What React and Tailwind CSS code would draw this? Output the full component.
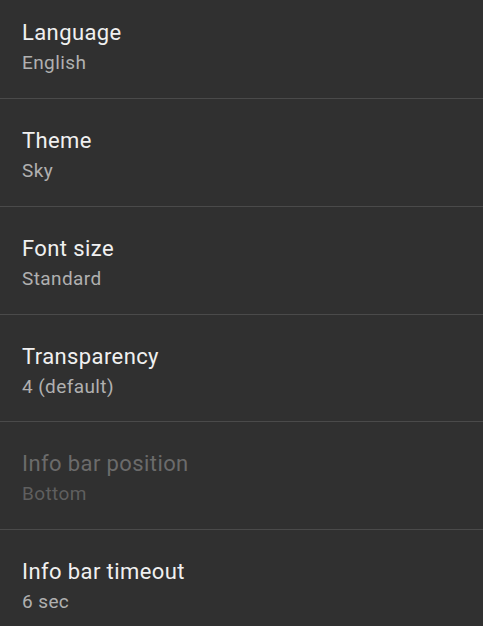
import React from "react";

const items = [
  { title: "Language", value: "English" },
  { title: "Theme", value: "Sky" },
  { title: "Font size", value: "Standard" },
  { title: "Transparency", value: "4 (default)" },
  { title: "Info bar position", value: "Bottom", disabled: true },
  { title: "Info bar timeout", value: "6 sec" },
];

function SettingRow({ title, value, disabled }) {
  return (
    <div className="h-[107.75px] px-[22px] pt-[28px] border-b border-[#4a4a4a] tracking-[0.4px]">
      <div
        className={
          "text-[22px] leading-[28px] " +
          (disabled ? "text-[#6b6b6b]" : "text-[#f0f0f0]")
        }
      >
        {title}
      </div>
      <div
        className={
          "text-[19px] leading-[24px] mt-[4px] " +
          (disabled ? "text-[#5f5f5f]" : "text-[#b0b0b0]")
        }
      >
        {value}
      </div>
    </div>
  );
}

export default function App() {
  return (
    <div
      className="w-[483px] h-[626px] bg-[#303030] overflow-hidden"
      style={{ fontFamily: "Roboto, 'Noto Sans', sans-serif" }}
    >
      <div className="-mt-[8.75px]">
        {items.map((item) => (
          <SettingRow key={item.title} {...item} />
        ))}
      </div>
    </div>
  );
}
